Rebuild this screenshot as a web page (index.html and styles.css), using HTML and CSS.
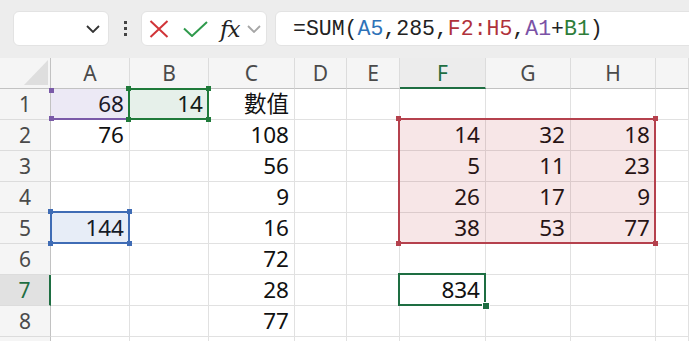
FILE: index.html
```html
<!DOCTYPE html>
<html lang="zh-Hant">
<head>
    <meta charset="UTF-8">
    <meta name="viewport" content="width=device-width, initial-scale=1.0">
    <title>SUM</title>
    <link rel="stylesheet" href="styles.css">
</head>
<body>
    <div class="toolbar">
        <div class="box namebox">
            <svg width="14" height="8" viewBox="0 0 14 8"><path d="M1 1l6 6 6-6" fill="none" stroke="#333" stroke-width="1.8"/></svg>
        </div>
        <div class="grip"><span></span><span></span><span></span></div>
        <div class="box fnbox">
            <svg class="ic-x" width="20" height="18" viewBox="0 0 20 18"><path d="M1.5 1l17 16M18.5 1l-17 16" stroke="#d13438" stroke-width="2" fill="none"/></svg>
            <svg class="ic-ok" width="25" height="16" viewBox="0 0 25 16"><path d="M1 7.5l8 7.5L24 1" stroke="#2f9a4c" stroke-width="2" fill="none"/></svg>
            <span class="fx">fx</span>
            <svg class="ic-more" width="14" height="8" viewBox="0 0 14 8"><path d="M1 1l6 6 6-6" fill="none" stroke="#a6a6a6" stroke-width="1.8"/></svg>
        </div>
        <div class="box formula">=SUM(<span class="ref-blue">A5</span>,285,<span class="ref-red">F2:H5</span>,<span class="ref-purple">A1</span>+<span class="ref-green">B1</span>)</div>
    </div>

    <div class="sheet" id="sheet">
        <div class="range purple"><span class="h tl"></span><span class="h bl"></span></div>
        <div class="range green"><span class="h tl"></span><span class="h tr"></span><span class="h bl"></span><span class="h br"></span></div>
        <div class="range blue"><span class="h tl"></span><span class="h tr"></span><span class="h bl"></span><span class="h br"></span></div>
        <div class="range red"><span class="h tl"></span><span class="h tr"></span><span class="h bl"></span><span class="h br"></span></div>
        <div class="range active"><span class="h br"></span></div>
    </div>

    <script>
        const sheet = document.getElementById('sheet');
        // последний столбец и строка видны только краем, без подписи
        const cols = ['A', 'B', 'C', 'D', 'E', 'F', 'G', 'H', ''];
        const rows = [
            ['68', '14', '數值'],
            ['76', '', '108', '', '', '14', '32', '18'],
            ['', '', '56', '', '', '5', '11', '23'],
            ['', '', '9', '', '', '26', '17', '9'],
            ['144', '', '16', '', '', '38', '53', '77'],
            ['', '', '72'],
            ['', '', '28', '', '', '834'],
            ['', '', '77'],
            []
        ];
        const activeCol = 'F';
        const activeRow = 7;

        function add(cls, text) {
            const el = document.createElement('div');
            el.className = cls;
            el.textContent = text || '';
            sheet.appendChild(el);
        }

        // Заголовки столбцов
        add('corner');
        cols.forEach(c => add(c === activeCol ? 'colhead sel' : 'colhead', c));

        // Строки
        rows.forEach((row, i) => {
            const n = i + 1;
            add(n === activeRow ? 'rowhead sel' : 'rowhead', n < rows.length ? n : '');
            cols.forEach((c, j) => add('cell', row[j]));
        });
    </script>
</body>
</html>
```

FILE: styles.css
```css
body {
    margin: 0;
    font-family: "Noto Sans", "Noto Sans CJK TC", sans-serif;
    background: #fff;
    color: #111;
    overflow: hidden;
    height: 341px;
}
.toolbar {
    display: flex;
    align-items: flex-start;
    height: 58px;
    box-sizing: border-box;
    padding: 11px 0 0 13px;
    background: #ededed;
}
.box {
    height: 35px;
    box-sizing: border-box;
    background: #fff;
    border: 1px solid #e3e3e3;
    border-radius: 6px;
    display: flex;
    align-items: center;
}
.namebox {
    width: 96px;
    justify-content: flex-end;
    padding-right: 8px;
}
.grip {
    width: 32px;
    height: 35px;
    display: flex;
    flex-direction: column;
    align-items: center;
    justify-content: center;
    gap: 3px;
}
.grip span {
    width: 3px;
    height: 3px;
    background: #444;
}
.fnbox {
    width: 126px;
    padding-left: 7px;
}
.ic-ok {
    margin-left: 14px;
}
.fx {
    margin-left: 12px;
    font-family: "DejaVu Serif", "Liberation Serif", serif;
    font-style: italic;
    font-size: 23px;
    line-height: 30px;
    color: #222;
    letter-spacing: -1px;
}
.ic-more {
    margin-left: 8px;
}
.formula {
    flex: 1;
    margin-left: 8px;
    margin-right: -10px;
    padding-left: 17px;
    font-family: "Liberation Mono", monospace;
    font-size: 21.5px;
    color: #222;
    white-space: nowrap;
}
.ref-blue { color: #2e72b8; }
.ref-red { color: #b0323b; }
.ref-purple { color: #7b52a6; }
.ref-green { color: #2e7d3a; }

.sheet {
    position: relative;
    display: grid;
    grid-template-columns: 51px 79px 79px 86px 52px 53px 86px 85px 85px 1fr;
    grid-auto-rows: 31px;
}
.cell, .colhead, .rowhead, .corner {
    box-sizing: border-box;
    border-right: 1px solid #e1e1e1;
    border-bottom: 1px solid #e1e1e1;
    white-space: nowrap;
    overflow: hidden;
}
.cell {
    font-size: 22.5px;
    line-height: 30px;
    text-align: right;
    padding-right: 5px;
}
.colhead, .rowhead, .corner {
    background: #f5f5f5;
    text-align: center;
    color: #4a4a4a;
    font-size: 21px;
    line-height: 30px;
}
.colhead {
    border-right-color: #dcdcdc;
    border-bottom-color: #c2c2c2;
}
.rowhead, .corner {
    border-right-color: #c2c2c2;
    border-bottom-color: #dcdcdc;
}
.corner {
    border-bottom-color: #c2c2c2;
}
.corner::after {
    content: '';
    display: block;
    width: 24px;
    height: 25px;
    margin: 2px 0 0 24px;
    background: #dedede;
    clip-path: polygon(100% 0, 100% 100%, 0 100%);
}
.colhead.sel {
    color: #1e6e42;
    background: #ececec;
    border-bottom: 2px solid #1e6e42;
}
.rowhead.sel {
    color: #1e6e42;
    background: #e1e1e1;
    border-right: 2px solid #1e6e42;
}

/* выделенные диапазоны */
.range {
    position: absolute;
    top: -2px;
    left: -2px;
    right: 0;
    bottom: 0;
    border: 2px solid currentColor;
}
.range .h {
    position: absolute;
    width: 5px;
    height: 5px;
    background: currentColor;
}
.h.tl { top: -4px; left: -4px; }
.h.tr { top: -4px; right: -4px; }
.h.bl { bottom: -4px; left: -4px; }
.h.br { bottom: -4px; right: -4px; }
.range.purple {
    grid-area: 2 / 2 / 3 / 3;
    color: #7a5aa8;
    border: 0;
    border-bottom: 2px solid currentColor;
    top: 0;
    left: 0;
    background: rgba(112, 84, 176, 0.13);
}
.range.purple .h.bl { bottom: -3px; left: -2px; }
.range.purple .h.tl { top: -1px; left: -2px; }
.range.green {
    grid-area: 2 / 3 / 3 / 4;
    color: #1f7a3a;
    top: -1px;
    background: rgba(30, 120, 60, 0.11);
}
.range.blue {
    grid-area: 6 / 2 / 7 / 3;
    color: #3f6cb5;
    left: -1px;
    background: rgba(60, 110, 190, 0.12);
}
.range.red {
    grid-area: 3 / 7 / 7 / 10;
    color: #b5414d;
    background: rgba(190, 50, 60, 0.12);
}
.range.active {
    grid-area: 8 / 7 / 9 / 8;
    color: #1e6e42;
}
.range.active .h.br {
    width: 6px;
    height: 6px;
    right: -5px;
    bottom: -5px;
    box-shadow: 0 0 0 1px #fff;
}
```
